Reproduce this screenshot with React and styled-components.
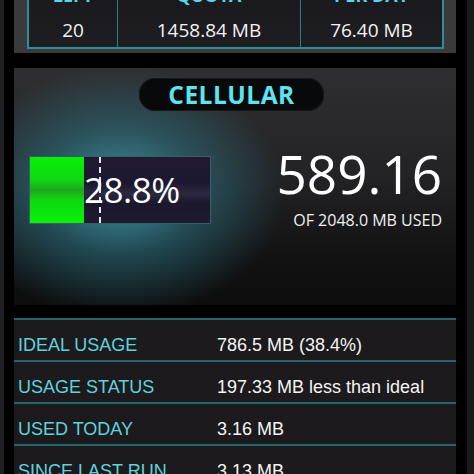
import React from 'react';
import styled, { createGlobalStyle } from "styled-components";

const GlobalStyle = createGlobalStyle`
html, body {
  margin:0;
  padding:0;
  background:#000;
  overflow:hidden;
}
#root {
  width:474px;
  height:474px;
  overflow:hidden;
}
`;

const Screen = styled.div`
height:474px;
box-sizing:border-box;
border-left:4px solid #202022;
border-right:7px solid #19191a;
padding:0 11px 0 10px;
background:#000;
display:flex;
flex-direction:column;
& > * { flex-shrink:0; }
`;

const StatsFrame = styled.div`
margin-top:-34px;
background:#3a3a3c;
padding:0 12px 4px 13px;
`;

const StatsBox = styled.div`
display:grid;
grid-template-columns:88px 183px 1fr;
background:linear-gradient(#18171b, #1e1d21);
border:2px solid #2c8f96;
border-top:none;
`;

const StatCell = styled.div`
display:flex;
flex-direction:column;
align-items:center;
border-left:${p => p.first ? 'none' : '1px solid #2a8088'};
font-family:"Open Sans", "DejaVu Sans", sans-serif;
`;

const StatLabel = styled.div`
height:38px;
display:flex;
align-items:flex-end;
color:#56d9e4;
font-weight:700;
font-size:18px;
line-height:18px;
`;

const StatValue = styled.div`
height:43px;
padding-top:14px;
box-sizing:border-box;
color:#f2f2f2;
font-size:19px;
line-height:24px;
`;

const CellularPanel = styled.div`
margin-top:15px;
height:237px;
box-sizing:border-box;
padding:10px 14px 0 15px;
background:
  radial-gradient(ellipse 165px 125px at 105px 124px, rgba(70,180,200,0.78), rgba(48,135,155,0.45) 50%, rgba(0,0,0,0) 100%),
  linear-gradient(#2f2f31 0%, #232325 45%, #121213 80%, #0d0d0d 100%);
display:flex;
flex-direction:column;
`;

const Pill = styled.div`
align-self:center;
margin-right:8px;
width:185px;
height:33px;
border-radius:16px;
background:#08090a;
box-shadow:inset 0 0 0 1px #151719;
display:flex;
align-items:center;
justify-content:center;
color:#5fe3ee;
font-family:"Open Sans", "DejaVu Sans", sans-serif;
font-weight:700;
font-size:24.5px;
letter-spacing:0.5px;
`;

const UsageRow = styled.div`
margin-top:45px;
display:flex;
justify-content:space-between;
align-items:flex-start;
`;

const Bar = styled.div`
position:relative;
width:182px;
height:68px;
box-sizing:border-box;
border:1px solid #3b5e66;
background:linear-gradient(#201b33 0%, #1c1830 40%, #2c2840 55%, #1b172c 70%, #1e1a30 100%);
display:flex;
align-items:center;
`;

const Fill = styled.div`
width:54px;
align-self:stretch;
background:linear-gradient(#08f008 0%, #10d810 35%, #1fa51f 50%, #10d810 65%, #06f206 100%);
`;

const Dash = styled.div`
position:absolute;
left:69px;
top:0;
bottom:0;
border-left:2px dashed #e6e6f0;
`;

const Percent = styled.div`
position:relative;
color:#fff;
font-family:"Open Sans", "DejaVu Sans", sans-serif;
font-size:35px;
font-stretch:90%;
letter-spacing:-0.5px;
line-height:44px;
`;

const Totals = styled.div`
display:flex;
flex-direction:column;
align-items:flex-end;
margin-top:-14px;
font-family:"Open Sans", "DejaVu Sans", sans-serif;
color:#fff;
`;

const BigNumber = styled.div`
font-size:53px;
font-stretch:91%;
line-height:64px;
`;

const SubText = styled.div`
font-size:16px;
font-stretch:96%;
line-height:20px;
color:#f0f0f0;
margin-top:4px;
`;

const Table = styled.div`
margin-top:13px;
background:#1c1a1c;
flex:1;
`;

const Row = styled.div`
height:42px;
box-sizing:border-box;
border-top:2px solid #24666c;
padding:10px 0 0 4px;
display:grid;
grid-template-columns:199px 1fr;
align-items:center;
font-family:"Liberation Sans", Arial, sans-serif;
font-size:18px;
`;

const RowLabel = styled.div`
color:#5fd3dc;
`;

const RowValue = styled.div`
color:#f4f4f4;
`;

const stats = [
  { label: "LEFT", value: "20" },
  { label: "QUOTA", value: "1458.84 MB" },
  { label: "PER DAY", value: "76.40 MB" },
];

const rows = [
  ["IDEAL USAGE", "786.5 MB (38.4%)"],
  ["USAGE STATUS", "197.33 MB less than ideal"],
  ["USED TODAY", "3.16 MB"],
  ["SINCE LAST RUN", "3.13 MB"],
];

export default function App() {
  return (
    <>
      <GlobalStyle />
      <Screen>
        <StatsFrame>
          <StatsBox>
            {stats.map((s, i) => (
              <StatCell key={s.label} first={i === 0}>
                <StatLabel>{s.label}</StatLabel>
                <StatValue>{s.value}</StatValue>
              </StatCell>
            ))}
          </StatsBox>
        </StatsFrame>

        <CellularPanel>
          <Pill>CELLULAR</Pill>
          <UsageRow>
            <Bar>
              <Fill />
              <Dash />
              <Percent>28.8%</Percent>
            </Bar>
            <Totals>
              <BigNumber>589.16</BigNumber>
              <SubText>OF 2048.0 MB USED</SubText>
            </Totals>
          </UsageRow>
        </CellularPanel>

        <Table>
          {rows.map(([label, value]) => (
            <Row key={label}>
              <RowLabel>{label}</RowLabel>
              <RowValue>{value}</RowValue>
            </Row>
          ))}
        </Table>
      </Screen>
    </>
  );
}
